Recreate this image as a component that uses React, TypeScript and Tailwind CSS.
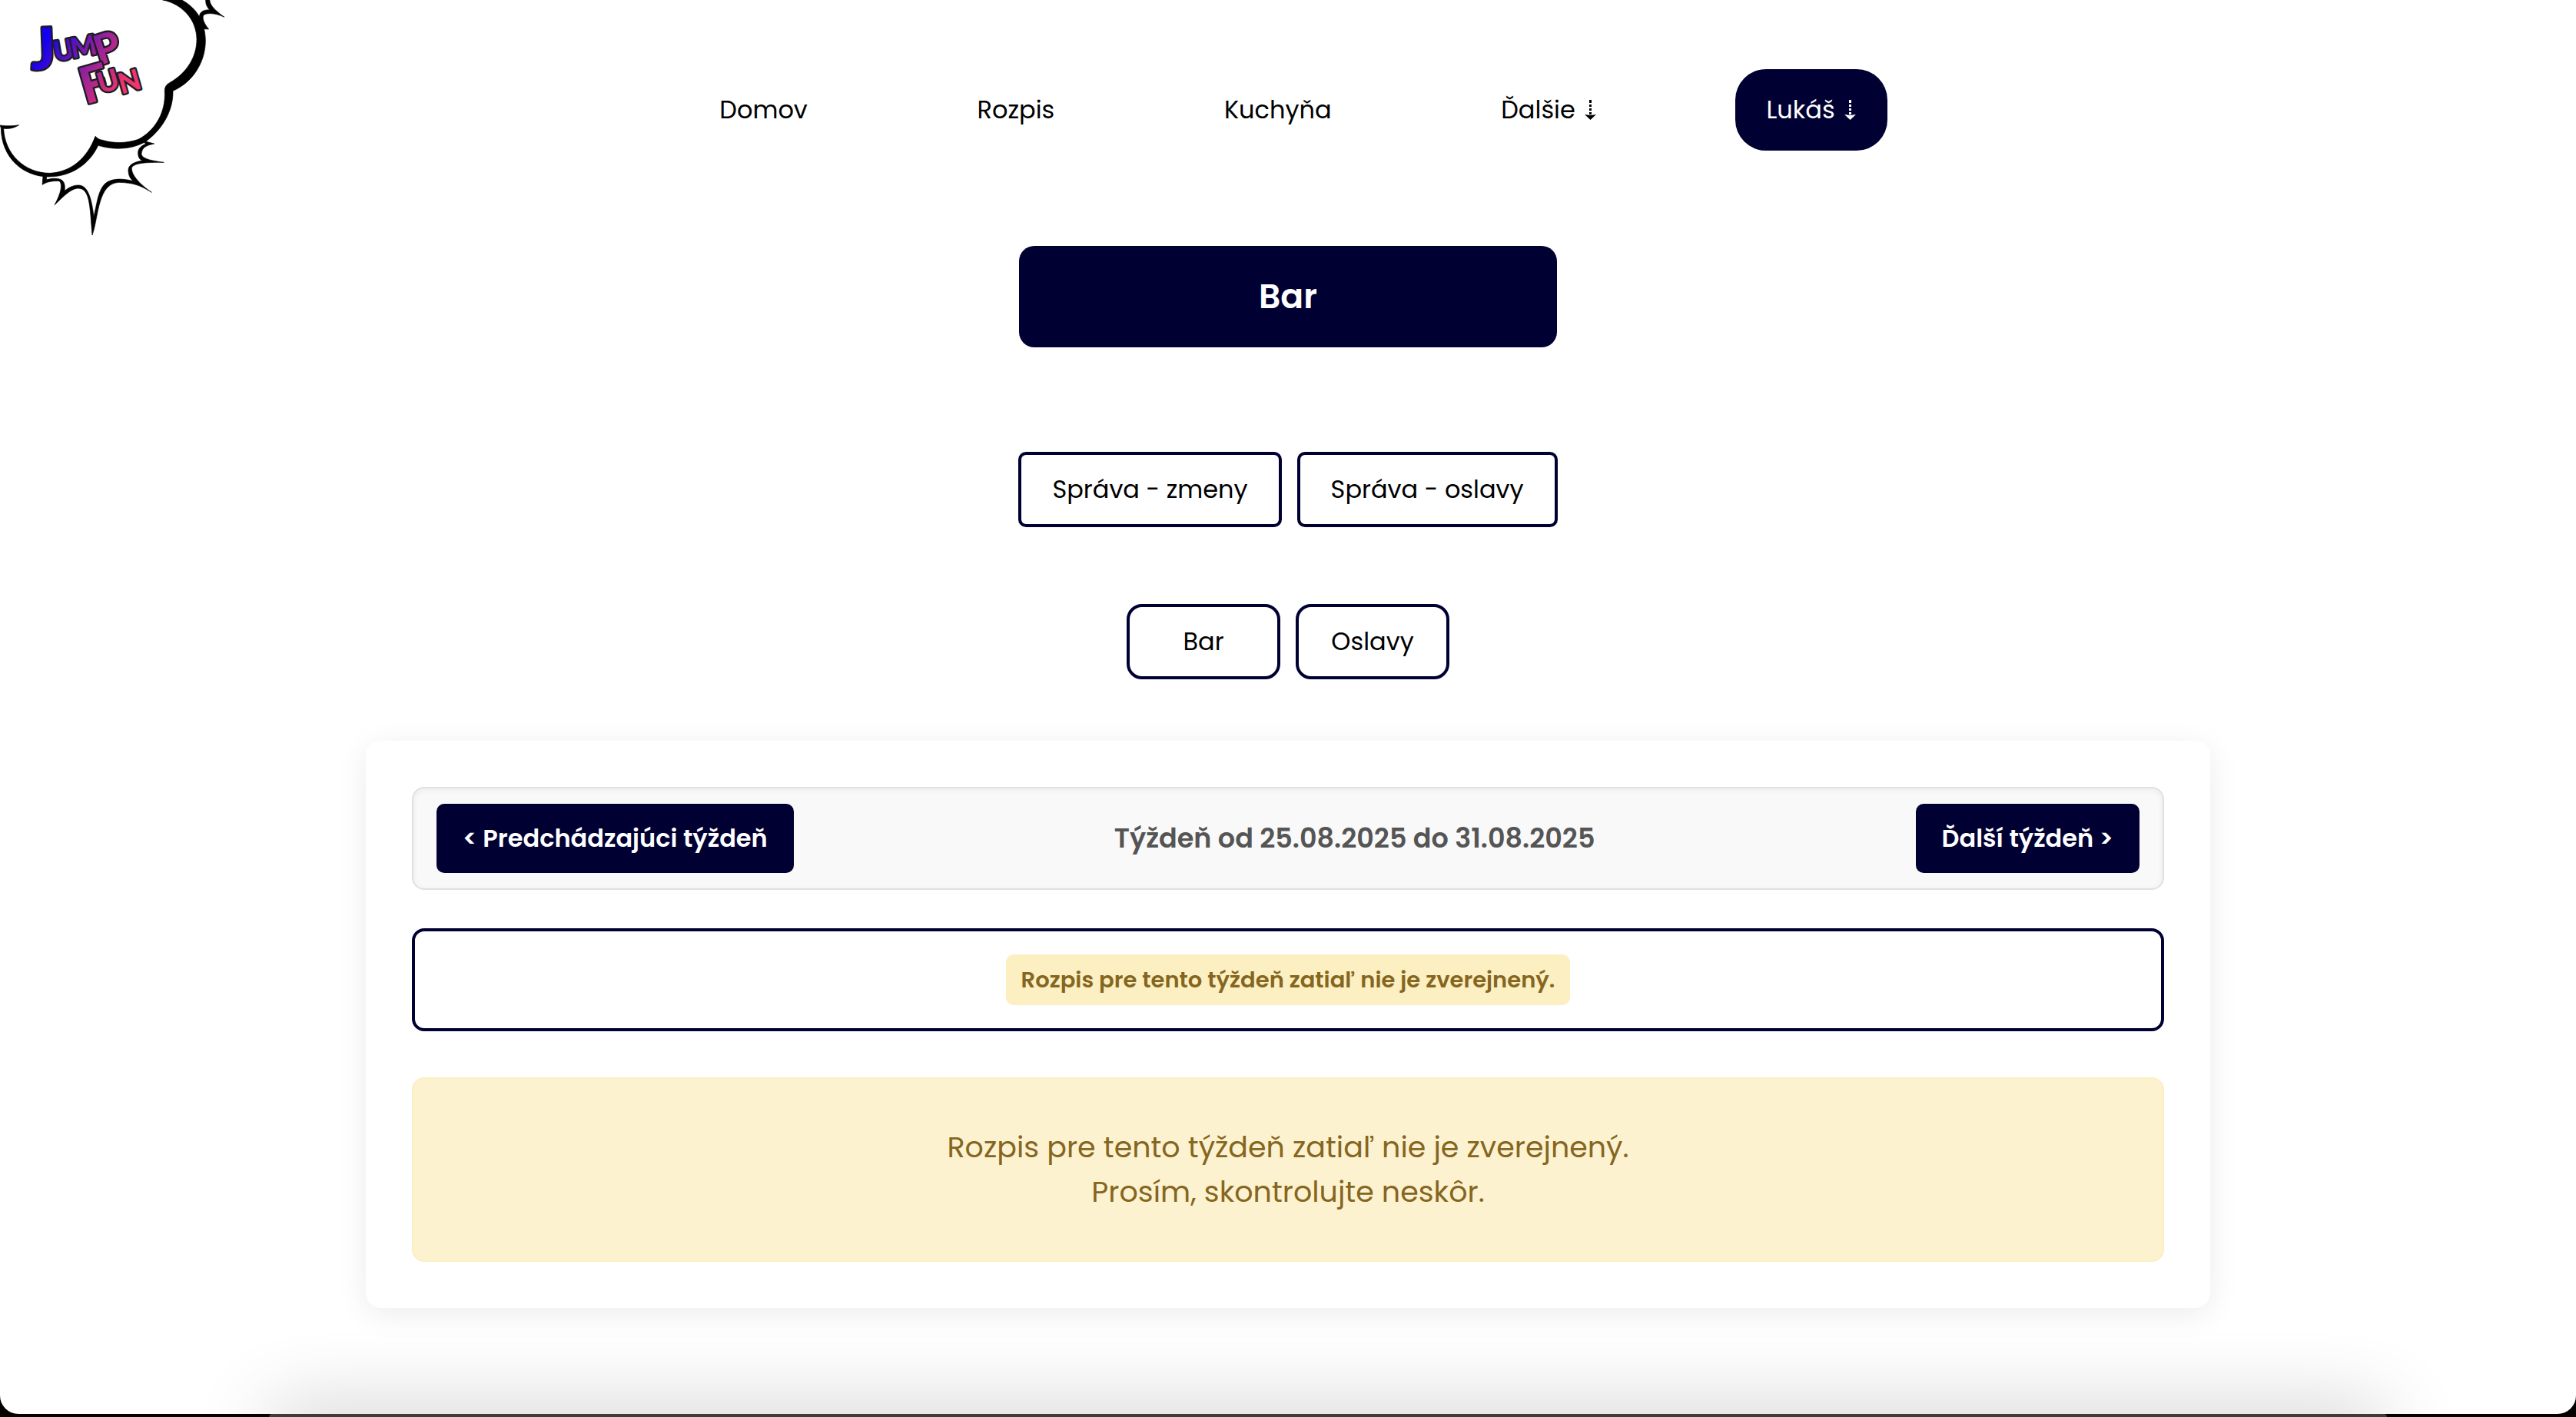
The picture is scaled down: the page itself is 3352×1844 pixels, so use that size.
import type { ReactNode } from "react";

function DownArrow() {
  return (
    <svg className="h-[26px] w-4 shrink-0" viewBox="0 0 16 26" fill="currentColor" aria-hidden="true">
      <rect x="6" y="0" width="3" height="4" />
      <rect x="6" y="6" width="3" height="3" />
      <rect x="6" y="11" width="3" height="3" />
      <rect x="6" y="16" width="3" height="3" />
      <path d="M0 19 L7.5 20 L15 19 L7.5 26 Z" />
    </svg>
  );
}

function Logo() {
  return (
    <svg className="absolute top-0 left-0 w-[300px]" viewBox="0 0 900 960" role="img" aria-label="Jump Fun">
      <defs>
        <linearGradient id="ink" gradientUnits="userSpaceOnUse" x1="170" y1="170" x2="480" y2="340">
          <stop offset="0" stopColor="#1400f0" />
          <stop offset="0.5" stopColor="#8a1f9f" />
          <stop offset="1" stopColor="#f0356a" />
        </linearGradient>
      </defs>
      <g stroke="#000000" strokeWidth="2">
        <path d="M710 0 C775 35 802 95 802 160 C802 240 755 320 675 355 C677 425 640 500 570 552 C520 582 450 588 383 568 C350 640 280 690 190 690 C90 690 5 615 4 500 L0 489 C30 493 50 492 74 488 C55 500 35 504 14 502 C18 600 95 676 195 676 C275 672 340 620 372 532 C382 542 390 546 400 547 C450 562 500 558 540 544 C605 510 648 440 643 355 C643 338 650 330 662 323 C730 285 768 220 768 155 C768 75 710 15 635 0 Z" />
        <path d="M168 688 L165 721 C190 706 215 706 232 707 C245 720 238 755 213 800 C250 765 275 738 303 735 C352 735 350 800 360 918 C385 850 380 715 465 712 C520 714 545 722 592 751 C540 715 512 680 514 655 C525 635 570 634 640 634 C590 627 553 620 552 600 C555 575 570 568 602 561 L560 550 L568 562 C545 572 538 585 539 600 C540 615 545 622 555 627 C510 635 500 650 501 668 C503 690 510 698 520 707 C475 695 430 695 405 722 C380 755 378 800 366 845 C358 780 345 722 305 723 C285 723 270 732 252 745 C258 700 235 690 182 701 L182 688 Z" />
        <path d="M803 0 C802 15 808 28 818 38 C790 38 776 50 779 70 L782 112 L815 114 C800 95 790 78 793 62 C800 50 835 48 876 67 C840 40 822 25 818 0 Z" />
      </g>
      <text
        fill="url(#ink)"
        stroke="#1c1c24"
        strokeWidth="14"
        strokeLinejoin="round"
        paintOrder="stroke"
        className="font-['Lato','Open_Sans',sans-serif] font-black"
      >
        <tspan x="122" y="272" rotate="-2" fontSize="225">J</tspan>
        <tspan x="216 282" y="240 228" rotate="-10" fontSize="108">UM</tspan>
        <tspan x="388" y="256" rotate="-18" fontSize="160">P</tspan>
        <tspan x="334" y="408" rotate="-16" fontSize="196">F</tspan>
        <tspan x="392 474" y="366 368" rotate="-16" fontSize="112">UN</tspan>
      </text>
    </svg>
  );
}

function NavLink({ children }: { children: ReactNode }) {
  return (
    <a href="#" className="flex items-center gap-3 px-10 py-7">
      {children}
    </a>
  );
}

function WeekButton({ children }: { children: ReactNode }) {
  return (
    <button className="rounded-[10px] bg-[#000033] px-[34px] py-5 text-[32px] leading-[50px] font-semibold text-white">
      {children}
    </button>
  );
}

export default function App() {
  return (
    <div className="min-h-screen bg-black font-['Poppins','Inter',sans-serif] text-[32px] leading-[50px] text-black">
      <div className="relative flex min-h-[calc(100vh-4px)] flex-col items-center overflow-hidden rounded-b-3xl bg-white px-10 pt-[90px]">
        <Logo />

        <nav className="flex w-full max-w-[1700px] items-center justify-around">
          <NavLink>Domov</NavLink>
          <NavLink>Rozpis</NavLink>
          <NavLink>Kuchyňa</NavLink>
          <NavLink>
            Ďalšie
            <DownArrow />
          </NavLink>
          <button className="flex items-center gap-3 rounded-[40px] bg-[#000033] px-10 py-7 text-white">
            Lukáš
            <DownArrow />
          </button>
        </nav>

        <h1 className="mt-[124px] w-full max-w-[700px] rounded-[20px] bg-[#000033] py-8 text-center text-[44px] leading-[68px] font-semibold text-white">
          Bar
        </h1>

        <div className="mt-[136px] flex gap-5">
          <button className="rounded-[10px] border-4 border-[#000033] px-10 py-5">Správa - zmeny</button>
          <button className="rounded-[10px] border-4 border-[#000033] px-10 py-5">Správa - oslavy</button>
        </div>

        <div className="mt-[100px] flex gap-5">
          <button className="w-[200px] rounded-[20px] border-4 border-[#000033] py-5">Bar</button>
          <button className="w-[200px] rounded-[20px] border-4 border-[#000033] py-5">Oslavy</button>
        </div>

        <main className="mt-20 w-full max-w-[2400px] rounded-[20px] bg-white p-[60px] shadow-[0_8px_40px_rgba(0,0,0,0.08)]">
          <div className="flex items-center justify-between rounded-2xl border-2 border-[#e0e0e0] bg-[#f9f9f9] px-[30px] py-5 shadow-[inset_0_2px_8px_rgba(0,0,0,0.06)]">
            <WeekButton>&lt; Predchádzajúci týždeň</WeekButton>
            <h2 className="text-[35px] font-semibold text-[#555555]">Týždeň od 25.08.2025 do 31.08.2025</h2>
            <WeekButton>Ďalší týždeň &gt;</WeekButton>
          </div>

          <div className="mt-[50px] flex justify-center rounded-2xl border-4 border-[#000033] py-[30px]">
            <p className="rounded-[10px] bg-[#fcefc1] px-5 py-2.5 text-[29px] leading-[46px] font-semibold text-[#856620]">
              Rozpis pre tento týždeň zatiaľ nie je zverejnený.
            </p>
          </div>

          <div className="mt-[60px] rounded-2xl border-2 border-[#fcefc1] bg-[#fdf2d0] py-[60px] text-center text-[38px] leading-[58px] text-[#856620]">
            <p>Rozpis pre tento týždeň zatiaľ nie je zverejnený.</p>
            <p>Prosím, skontrolujte neskôr.</p>
          </div>
        </main>

        <div className="absolute right-[246px] -bottom-10 left-[350px] h-10 rounded-t-3xl shadow-[0_0_100px_rgba(0,0,0,0.3)]" />
      </div>
      <div className="mr-[246px] ml-[350px] h-1 rounded-t bg-[#3c3c38]" />
    </div>
  );
}
